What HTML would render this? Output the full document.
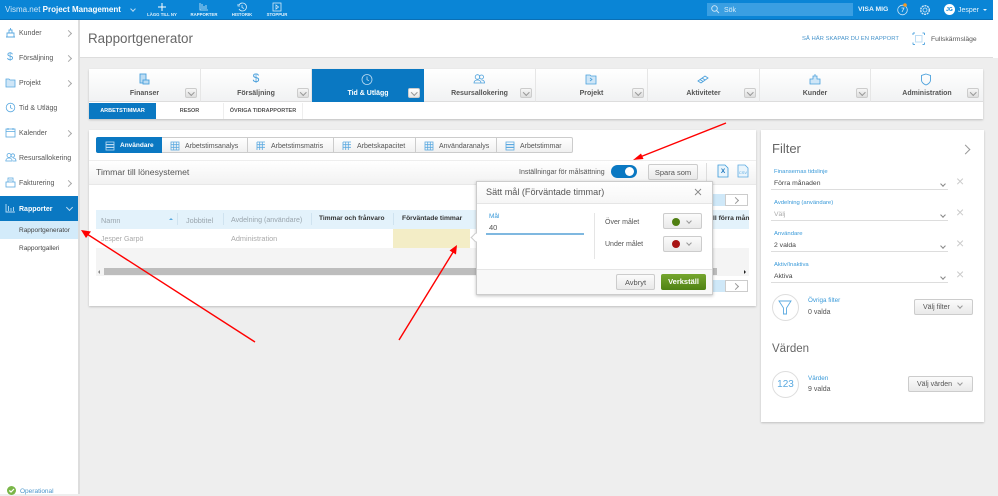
<!DOCTYPE html>
<html lang="sv"><head><meta charset="utf-8"><title>Rapportgenerator</title>
<style>
*{box-sizing:border-box;margin:0;padding:0}
html,body{width:998px;height:494px;overflow:hidden;background:#eee;font-family:"Liberation Sans","DejaVu Sans",sans-serif;color:#555}
.a{position:absolute}
.t{position:absolute;white-space:nowrap;line-height:1}
svg{position:absolute;overflow:visible}
.c{text-align:center}
.tab{position:absolute;top:69px;height:33px;width:112px;background:linear-gradient(#fff,#f1f2f3);border-right:1px solid #e6e6e6;border-bottom:1px solid #ddd}
.tab .l{position:absolute;left:0;right:0;top:21px;text-align:center;font-size:7px;font-weight:bold;color:#555;line-height:1}
.tab .d{position:absolute;left:96px;top:19px;width:12px;height:10px;background:linear-gradient(#f6f6f6,#ddd);border:1px solid #ccc;border-radius:2px}
.tab .d:after{content:"";position:absolute;left:3px;top:1px;width:3.5px;height:3.5px;border-right:1px solid #999;border-bottom:1px solid #999;transform:rotate(45deg)}
.tab svg{left:49px;top:4px}
.s{position:absolute;left:0;width:78px;height:25px}
.s .x{position:absolute;left:19px;top:9px;font-size:7px;color:#555;line-height:1;white-space:nowrap}
.s svg{left:5px;top:6px}
.s i{position:absolute;left:66px;top:10px;width:5px;height:5px;border-right:1px solid #aaa;border-top:1px solid #aaa;transform:rotate(45deg)}
.rt{position:absolute;top:137px;height:16px;background:linear-gradient(#fff,#f0f0f0);border:1px solid #ccc;border-left:none}
.rt span{position:absolute;left:23px;top:5px;font-size:7px;line-height:1;white-space:nowrap;color:#555}
.rt svg{left:8px;top:3px}
.th{position:absolute;top:217px;font-size:7.3px;line-height:1;white-space:nowrap}
.sep{position:absolute;top:213px;width:1px;height:12px;background:#cfe3f0}
.fl{position:absolute;left:774px;font-size:5.9px;color:#3a9ad9;line-height:1;white-space:nowrap}
.fv{position:absolute;left:774px;font-size:6.8px;color:#444;line-height:1;white-space:nowrap}
.fu{position:absolute;left:771px;width:177px;height:1px;background:#ddd}
.fc{position:absolute;left:941px;width:4px;height:4px;border-right:1px solid #888;border-bottom:1px solid #888;transform:rotate(45deg)}
.fx{position:absolute;left:956px;font-size:14px;color:#ccc;line-height:1}
.btn{position:absolute;background:linear-gradient(#fbfbfb,#e9e9e9);border:1px solid #ccc;border-radius:2px;color:#555;font-size:7.5px;line-height:1}
.pg{position:absolute;left:725px;width:23px;height:12px;background:#fff;border:1px solid #ccc}
.pg:after{content:"";position:absolute;left:7px;top:3px;width:4px;height:4px;border-right:1px solid #999;border-top:1px solid #999;transform:rotate(45deg)}
.ci{position:absolute;left:772px;width:27px;height:27px;border-radius:50%;border:1px solid #ddd;background:#fff}
.chev{position:absolute;width:4px;height:4px;border-right:1px solid #999;border-bottom:1px solid #999;transform:rotate(45deg)}
</style></head><body>

<!-- top bar -->
<div class="a" style="left:0;top:0;width:993px;height:20px;background:#0a85d6;border-bottom:1px solid #0a6fb5"></div>
<div class="a" style="left:993px;top:0;width:5px;height:58px;background:#fff"></div>
<div class="t" style="left:5px;top:6px;font-size:8px;color:#cfe6f7">Visma.net <b style="color:#fff">Project Management</b></div>
<div class="chev" style="left:131px;top:7px;border-color:#bcdcf3"></div>
<svg style="left:157px;top:2px" width="10" height="10"><path d="M5 1v8M1 5h8" stroke="#fff" stroke-width="1"/></svg>
<div class="t c" style="left:140px;width:44px;top:12.500px;font-size:4.300px;font-weight:bold;color:#e4f2fb">LÄGG TILL NY</div>
<svg style="left:199px;top:2px" width="10" height="9" fill="none" stroke="#d6ebf9" stroke-width=".8"><path d="M1 1v7h8M3 7V2M5 7V4M7 7V3"/></svg>
<div class="t c" style="left:184px;width:40px;top:12.500px;font-size:4.300px;font-weight:bold;color:#e4f2fb">RAPPORTER</div>
<svg style="left:237px;top:2px" width="10" height="10" fill="none" stroke="#d6ebf9" stroke-width=".8"><path d="M2 3a4 4 0 1 1 0 4M5 3v2.500l2 1M1 2v2h2"/></svg>
<div class="t c" style="left:222px;width:40px;top:12.500px;font-size:4.300px;font-weight:bold;color:#e4f2fb">HISTORIK</div>
<svg style="left:272px;top:2px" width="10" height="10" fill="none" stroke="#d6ebf9" stroke-width=".8"><rect x="1" y="1" width="8" height="8"/><path d="M4 3l2.500 2L4 7z"/></svg>
<div class="t c" style="left:257px;width:40px;top:12.500px;font-size:4.300px;font-weight:bold;color:#e4f2fb">STOPPUR</div>

<div class="a" style="left:707px;top:3px;width:146px;height:13px;background:#3a9fe2"></div>
<svg style="left:711px;top:5px" width="9" height="9" fill="none" stroke="#cfe6f7" stroke-width=".9"><circle cx="3.500" cy="3.500" r="2.800"/><path d="M5.500 5.500L8 8"/></svg>
<div class="t" style="left:724px;top:7px;font-size:7px;color:#d8edfa">Sök</div>
<div class="t" style="left:858px;top:7px;font-size:6.800px;font-weight:bold;color:#eaf5fc">VISA MIG</div>
<svg style="left:896px;top:3px" width="14" height="14" fill="none"><circle cx="6.500" cy="7" r="4.800" stroke="#cfe6f7" stroke-width=".8"/><path d="M5.500 5h2.500L6 9" stroke="#cfe6f7" stroke-width=".8"/><circle cx="9" cy="2" r="1.800" fill="#f59a23"/></svg>
<svg style="left:919px;top:4px" width="12" height="12" fill="none" stroke="#cfe6f7" stroke-width=".8"><circle cx="6" cy="6" r="2"/><circle cx="6" cy="6" r="4.300" stroke-dasharray="2 .8" stroke-width="1.400"/></svg>
<div class="a" style="left:944px;top:4px;width:11px;height:11px;border-radius:50%;background:#fff"></div>
<div class="t c" style="left:944px;width:11px;top:7.500px;font-size:5px;font-weight:bold;color:#0a85d6">JG</div>
<div class="t" style="left:958px;top:7px;font-size:7px;color:#e4f2fb">Jesper</div>
<div class="a" style="left:983px;top:9px;border-left:2px solid transparent;border-right:2px solid transparent;border-top:2px solid #e4f2fb"></div>

<!-- sidebar -->
<div class="a" style="left:0;top:20px;width:78px;height:474px;background:#fff"></div>
<div class="a" style="left:78px;top:20px;width:2px;height:474px;background:#ddd"></div>

<div class="s" style="top:21px"><svg width="11" height="11" fill="none" stroke="#5aa9e0" stroke-width=".9"><path d="M1 10h9M2 10V6h7v4M4 6V3h3v3M5.500 1v2"/></svg><div class="x">Kunder</div><i></i></div>
<div class="s" style="top:46px"><div class="t" style="left:7px;top:6px;font-size:11px;color:#5aa9e0">$</div><div class="x">Försäljning</div><i></i></div>
<div class="s" style="top:71px"><svg width="11" height="11" fill="#cfe6f7" stroke="#5aa9e0" stroke-width=".8"><path d="M1 2h3l1 1h5v7H1z"/></svg><div class="x">Projekt</div><i></i></div>
<div class="s" style="top:96px"><svg width="11" height="11" fill="none" stroke="#5aa9e0" stroke-width=".8"><circle cx="5.500" cy="5.500" r="4.300"/><path d="M5.500 3v2.800l2 1"/></svg><div class="x">Tid &amp; Utlägg</div></div>
<div class="s" style="top:121px"><svg width="11" height="11" fill="none" stroke="#5aa9e0" stroke-width=".8"><rect x="1" y="2" width="9" height="8"/><path d="M1 4.500h9M3 1v2M8 1v2"/></svg><div class="x">Kalender</div><i></i></div>
<div class="s" style="top:146px"><svg width="11" height="11" fill="none" stroke="#5aa9e0" stroke-width=".8"><circle cx="4" cy="3.500" r="2"/><circle cx="7.800" cy="3.500" r="1.700"/><path d="M.8 9c0-4 6.400-4 6.400 0zM8 6c2 0 3 1 3 3H8"/></svg><div class="x">Resursallokering</div></div>
<div class="s" style="top:171px"><svg width="11" height="11" fill="none" stroke="#5aa9e0" stroke-width=".8"><rect x="1" y="5" width="9" height="5"/><path d="M3 5V1h5v4M4 3h3"/></svg><div class="x">Fakturering</div><i></i></div>
<div class="a" style="left:0;top:196px;width:78px;height:25px;background:#0a78c2"></div>
<div class="s" style="top:196px"><svg width="11" height="11" fill="none" stroke="#b9ddf5" stroke-width=".9"><path d="M1 2v8h9M3.500 9V4M6 9V6M8.500 9V5"/></svg><div class="x" style="color:#fff;font-weight:bold;top:10px">Rapporter</div></div>
<div class="chev" style="left:67px;top:205px;width:5px;height:5px;border-color:#bcdcf3"></div>
<div class="a" style="left:0;top:221px;width:78px;height:18px;background:#d3ebfa"></div>
<div class="t" style="left:19px;top:228px;font-size:6.500px;color:#444">Rapportgenerator</div>
<div class="t" style="left:19px;top:246px;font-size:6.500px;color:#444">Rapportgalleri</div>
<div class="a" style="left:7px;top:486px;width:9px;height:9px;border-radius:50%;background:#7ab648"></div>
<svg style="left:7px;top:486px" width="9" height="8" fill="none" stroke="#fff" stroke-width="1.200"><path d="M2.300 4.500l1.700 1.500 3-3"/></svg>
<div class="t" style="left:20px;top:489px;font-size:6.500px;color:#4a96cc">Operational</div>

<!-- title -->
<div class="a" style="left:80px;top:20px;width:913px;height:38px;background:#fff;border-bottom:1px solid #ddd"></div>
<div class="t" style="left:88px;top:32px;font-size:13.400px;color:#666">Rapportgenerator</div>
<div class="t" style="left:802px;top:37px;font-size:5.900px;color:#4a96cc">SÅ HÄR SKAPAR DU EN RAPPORT</div>
<svg style="left:913px;top:33px" width="12" height="12" fill="none" stroke="#5aa9e0" stroke-width="1"><rect x="2.500" y="2.500" width="6.500" height="6.500" stroke="#bcdcf3"/><path d="M0 0h2M9.500 0h2M0 11.500h2M9.500 11.500h2M0 0v2M11.500 0v2M0 9.500v2M11.500 9.500v2"/></svg>
<div class="t" style="left:931px;top:37px;font-size:6.800px;color:#555">Fullskärmsläge</div>

<!-- module tabs -->
<div class="a" style="left:89px;top:69px;width:894px;height:50px;background:#fff;box-shadow:0 1px 2px rgba(0,0,0,.2)"></div>
<div class="tab" style="left:89px"><svg width="12" height="13" fill="#bcdcf3" stroke="#4aa0dc" stroke-width=".9"><rect x="2" y="1" width="6" height="9"/><rect x="5" y="7" width="6" height="4"/></svg><div class="l">Finanser</div><div class="d"></div></div>
<div class="tab" style="left:201px;width:111px"><div class="t c" style="left:49px;top:3px;width:12px;font-size:12px;color:#4aa0dc">$</div><div class="l">Försäljning</div><div class="d"></div></div>
<div class="tab" style="left:312px;background:#0a78c2;border:none;height:33px"><svg width="12" height="13" fill="none" stroke="#bcdcf3" stroke-width=".8"><circle cx="6" cy="6.500" r="5"/><path d="M6 3.500v3.200l2 1"/></svg><div class="l" style="color:#fff">Tid &amp; Utlägg</div><div class="d" style="background:linear-gradient(#fff,#e8e8e8)"></div></div>
<div class="tab" style="left:424px"><svg width="12" height="13" fill="none" stroke="#4aa0dc" stroke-width=".8"><circle cx="4.500" cy="4" r="2.300"/><circle cx="8.500" cy="4" r="2"/><path d="M1 10c0-4 7-4 7 0zM8.500 7c2 0 3 1 3 3H8"/></svg><div class="l">Resursallokering</div><div class="d"></div></div>
<div class="tab" style="left:536px"><svg width="12" height="13" fill="#cfe6f7" stroke="#4aa0dc" stroke-width=".8"><path d="M1 2h4l1 1h5v8H1z"/><path d="M5 5l2 1.500L5 8" fill="none"/></svg><div class="l">Projekt</div><div class="d"></div></div>
<div class="tab" style="left:648px"><svg width="12" height="13" fill="none" stroke="#4aa0dc" stroke-width=".9"><path d="M1 8l7-5 3 2-7 5zM3 6.500l3 2M5 5l3 2"/></svg><div class="l">Aktiviteter</div><div class="d"></div></div>
<div class="tab" style="left:760px;width:111px"><svg width="12" height="13" fill="#cfe6f7" stroke="#4aa0dc" stroke-width=".8"><path d="M1 11V6h3V3h4v3h3v5zM6 1v2"/></svg><div class="l">Kunder</div><div class="d"></div></div>
<div class="tab" style="left:871px;width:112px;border-right:none"><svg width="12" height="13" fill="none" stroke="#4aa0dc" stroke-width=".9"><path d="M6 1l4.500 1.500V7c0 2.500-2 4-4.500 5C3.500 11 1.500 9.500 1.500 7V2.500z"/></svg><div class="l">Administration</div><div class="d"></div></div>

<div class="a" style="left:89px;top:103px;width:67px;height:16px;background:#0a78c2"></div>
<div class="t c" style="left:89px;width:67px;top:109px;font-size:5.500px;font-weight:bold;color:#fff">ARBETSTIMMAR</div>
<div class="t c" style="left:156px;width:67px;top:109px;font-size:5.500px;font-weight:bold;color:#555">RESOR</div>
<div class="t c" style="left:223px;width:80px;top:109px;font-size:5.500px;font-weight:bold;color:#555">ÖVRIGA TIDRAPPORTER</div>
<div class="a" style="left:223px;top:103px;width:1px;height:16px;background:#eee"></div>
<div class="a" style="left:302px;top:103px;width:1px;height:16px;background:#eee"></div>

<!-- main card -->
<div class="a" style="left:89px;top:130px;width:667px;height:176px;background:#fff;box-shadow:0 1px 2px rgba(0,0,0,.2)"></div>
<div class="rt" style="left:96px;width:66px;background:#0a78c2;border:1px solid #0a78c2;border-radius:2px 0 0 2px"><svg width="10" height="10" fill="none" stroke="#bcdcf3" stroke-width=".8"><rect x="1" y="1" width="8" height="2.400"/><rect x="1" y="3.800" width="8" height="2.400"/><rect x="1" y="6.600" width="8" height="2.400"/></svg><span style="color:#fff;font-weight:bold;font-size:6.500px">Användare</span></div>
<div class="rt" style="left:162px;width:86px"><svg width="10" height="10" fill="none" stroke="#5aa9e0" stroke-width=".8"><rect x="1" y="1" width="8" height="8"/><path d="M3.700 1v8M6.300 1v8M1 3.700h8M1 6.300h8"/></svg><span>Arbetstimsanalys</span></div>
<div class="rt" style="left:248px;width:86px"><svg width="10" height="10" fill="none" stroke="#5aa9e0" stroke-width=".8"><path d="M1 1h8M1 3.700h8M1 6.300h8M3.700 1v8M6.300 1v8M1 1v8"/></svg><span>Arbetstimsmatris</span></div>
<div class="rt" style="left:334px;width:82px"><svg width="10" height="10" fill="none" stroke="#5aa9e0" stroke-width=".8"><path d="M1 1h8M1 3.700h8M1 6.300h8M3.700 1v8M6.300 1v8M1 1v8"/></svg><span>Arbetskapacitet</span></div>
<div class="rt" style="left:416px;width:81px"><svg width="10" height="10" fill="none" stroke="#5aa9e0" stroke-width=".8"><rect x="1" y="1" width="8" height="8"/><path d="M3.700 1v8M6.300 1v8M1 3.700h8M1 6.300h8"/></svg><span>Användaranalys</span></div>
<div class="rt" style="left:497px;width:76px;border-radius:0 2px 2px 0"><svg width="10" height="10" fill="none" stroke="#5aa9e0" stroke-width=".8"><rect x="1" y="1" width="8" height="2.400"/><rect x="1" y="3.800" width="8" height="2.400"/><rect x="1" y="6.600" width="8" height="2.400"/></svg><span>Arbetstimmar</span></div>

<div class="a" style="left:89px;top:160px;width:667px;height:25px;background:linear-gradient(#fff,#f2f2f2);border-top:1px solid #eee;border-bottom:1px solid #e8e8e8"></div>
<div class="t" style="left:96px;top:168px;font-size:8.700px;color:#555">Timmar till lönesystemet</div>
<div class="t" style="left:519px;top:169px;font-size:7px;color:#555">Inställningar för målsättning</div>
<div class="a" style="left:611px;top:165px;width:26px;height:13px;border-radius:7px;background:#0a78c2"></div>
<div class="a" style="left:625px;top:167px;width:9px;height:9px;border-radius:50%;background:#fff"></div>
<div class="btn" style="left:648px;top:164px;width:50px;height:16px;text-align:center;padding-top:4px">Spara som</div>
<div class="a" style="left:706px;top:163px;width:1px;height:18px;background:#ddd"></div>
<svg style="left:717px;top:164px" width="13" height="15" fill="#eaf5fc" stroke="#3a9ad9" stroke-width=".8"><path d="M1 1h7l3 3v9H1z"/></svg>
<div class="t c" style="left:717px;width:12px;top:169px;font-size:6.500px;font-weight:bold;color:#1b75bb">X</div>
<svg style="left:737px;top:164px" width="13" height="15" fill="#eaf5fc" stroke="#5aa9e0" stroke-width=".8"><path d="M1 1h7l3 3v9H1z"/></svg>
<div class="t c" style="left:737px;width:12px;top:171px;font-size:4px;color:#5aa9e0">CSV</div>

<!-- pager -->
<div class="a" style="left:700px;top:194px;width:25px;height:12px;background:#cfe8f8"></div><div class="pg" style="top:194px"></div>
<div class="a" style="left:700px;top:280px;width:25px;height:12px;background:#cfe8f8"></div><div class="pg" style="top:280px"></div>

<!-- table -->
<div class="a" style="left:96px;top:210px;width:653px;height:19px;background:#e3f2fb"></div>
<div class="th" style="left:101px;color:#9aa5ad">Namn</div>
<div class="a" style="left:169px;top:218px;border-left:2px solid transparent;border-right:2px solid transparent;border-bottom:2px solid #5aa9e0"></div>
<div class="sep" style="left:177px"></div>
<div class="th" style="left:186px;color:#9aa5ad">Jobbtitel</div>
<div class="sep" style="left:223px"></div>
<div class="th" style="left:231px;color:#9aa5ad;font-size:7.100px">Avdelning (användare)</div>
<div class="sep" style="left:311px"></div>
<div class="th" style="left:319px;top:216px;color:#333;font-weight:bold;font-size:6.600px">Timmar och frånvaro</div>
<div class="sep" style="left:393px"></div>
<div class="th" style="left:402px;top:216px;color:#333;font-weight:bold;font-size:6.700px">Förväntade timmar</div>
<div class="th" style="left:713px;top:216px;color:#333;font-weight:bold;font-size:6.700px">ll förra mån</div>
<div class="t" style="left:101px;top:235.500px;font-size:7px;color:#aaa">Jesper Garpö</div>
<div class="t" style="left:231px;top:235px;font-size:7.300px;color:#aaa">Administration</div>
<div class="a" style="left:393px;top:229px;width:77px;height:19px;background:#f3edc6"></div>
<div class="a" style="left:96px;top:248px;width:653px;height:28px;background:#f4f4f4"></div>
<div class="a" style="left:104px;top:268px;width:613px;height:7px;background:#bdbdbd"></div>
<div class="a" style="left:98px;top:270px;border-top:2px solid transparent;border-bottom:2px solid transparent;border-right:2px solid #888"></div>
<div class="a" style="left:744px;top:270px;border-top:2px solid transparent;border-bottom:2px solid transparent;border-left:2px solid #222"></div>

<!-- dialog -->
<div class="a" style="left:476px;top:181px;width:237px;height:114px;background:#fff;border:1px solid #ccc;box-shadow:0 1px 3px rgba(0,0,0,.25)"></div>
<div class="a" style="left:472px;top:234px;width:7px;height:7px;background:#fff;border-left:1px solid #ccc;border-bottom:1px solid #ccc;transform:rotate(45deg)"></div>
<div class="a" style="left:477px;top:182px;width:235px;height:22px;background:linear-gradient(#fff,#f6f6f6);border-bottom:1px solid #e5e5e5"></div>
<div class="t" style="left:486px;top:188px;font-size:9.100px;color:#555">Sätt mål (Förväntade timmar)</div>
<svg style="left:694px;top:188px" width="8" height="8" stroke="#888" stroke-width=".9"><path d="M1 1l6 6M7 1l-6 6"/></svg>
<div class="t" style="left:489px;top:214px;font-size:6.500px;color:#3a9ad9">Mål</div>
<div class="t" style="left:489px;top:224px;font-size:7.500px;color:#555">40</div>
<div class="a" style="left:486px;top:233px;width:98px;height:1.500px;background:#7fb8e0"></div>
<div class="a" style="left:594px;top:213px;width:1px;height:46px;background:#e5e5e5"></div>
<div class="t" style="left:605px;top:219px;font-size:7px;color:#555">Över målet</div>
<div class="t" style="left:605px;top:241px;font-size:7px;color:#555">Under målet</div>
<div class="btn" style="left:663px;top:213px;width:39px;height:16px"></div>
<div class="a" style="left:672px;top:218px;width:8px;height:8px;border-radius:50%;background:#4f7f12"></div>
<div class="chev" style="left:687px;top:219px"></div>
<div class="btn" style="left:663px;top:236px;width:39px;height:16px"></div>
<div class="a" style="left:672px;top:240px;width:8px;height:8px;border-radius:50%;background:#a81414"></div>
<div class="chev" style="left:687px;top:241px"></div>
<div class="a" style="left:477px;top:269px;width:235px;height:25px;background:#f8f8f8;border-top:1px solid #e5e5e5"></div>
<div class="btn" style="left:616px;top:274px;width:39px;height:16px;text-align:center;padding-top:4px">Avbryt</div>
<div class="a" style="left:661px;top:274px;width:45px;height:16px;background:linear-gradient(#75a62e,#4f8214);border-radius:2px;color:#fff;font-size:7.500px;font-weight:bold;text-align:center;padding-top:4px;line-height:1">Verkställ</div>

<!-- filter -->
<div class="a" style="left:761px;top:130px;width:223px;height:292px;background:#fff;box-shadow:0 1px 2px rgba(0,0,0,.2)"></div>
<div class="t" style="left:772px;top:142px;font-size:13px;color:#666">Filter</div>
<div class="a" style="left:962px;top:146px;width:7px;height:7px;border-right:1px solid #999;border-top:1px solid #999;transform:rotate(45deg)"></div>

<div class="fl" style="top:170px">Finansernas tidslinje</div><div class="fv" style="top:180.500px">Förra månaden</div><div class="fu" style="top:189px"></div><div class="fc" style="top:182px"></div><div class="fx" style="top:174px">×</div>
<div class="fl" style="top:201px">Avdelning (användare)</div><div class="fv" style="top:211.500px;color:#aaa">Välj</div><div class="fu" style="top:220px"></div><div class="fc" style="top:213px"></div><div class="fx" style="top:205px">×</div>
<div class="fl" style="top:232px">Användare</div><div class="fv" style="top:242.500px">2 valda</div><div class="fu" style="top:251px"></div><div class="fc" style="top:244px"></div><div class="fx" style="top:236px">×</div>
<div class="fl" style="top:263px">Aktiv/Inaktiva</div><div class="fv" style="top:273.500px">Aktiva</div><div class="fu" style="top:282px"></div><div class="fc" style="top:275px"></div><div class="fx" style="top:267px">×</div>

<div class="ci" style="top:294px"></div>
<svg style="left:778px;top:300px" width="16" height="16" fill="none" stroke="#5aa9e0" stroke-width=".9"><path d="M1 1h12L8.500 8v6h-3V8z"/></svg>
<div class="fl" style="left:808px;top:298px;font-size:6.300px">Övriga filter</div>
<div class="t" style="left:808px;top:308.500px;font-size:7px;color:#555">0 valda</div>
<div class="btn" style="left:914px;top:299px;width:59px;height:16px;padding:4px 0 0 8px;font-size:7px">Välj filter</div>
<div class="chev" style="left:958px;top:304px"></div>

<div class="t" style="left:772px;top:344px;font-size:11.500px;color:#666">Värden</div>

<div class="ci" style="top:371px"></div>
<div class="t c" style="left:772px;width:27px;top:380px;font-size:10px;color:#5aa9e0">123</div>
<div class="fl" style="left:808px;top:375.500px;font-size:6.300px">Värden</div>
<div class="t" style="left:808px;top:385.500px;font-size:7px;color:#555">9 valda</div>
<div class="btn" style="left:908px;top:376px;width:65px;height:16px;padding:4px 0 0 8px;font-size:7px">Välj värden</div>
<div class="chev" style="left:958px;top:381px"></div>

<!-- annotations -->
<svg style="left:0;top:0" width="998" height="494" fill="none">
<g stroke="#f00" stroke-width="1.400">
<path d="M255 342L87 234"/>
<path d="M399 340L455 249"/>
<path d="M726 123L640 157"/>
</g>
<path d="M81 230l10 1.500-5 6.500z" fill="#f00"/>
<path d="M457 245l-1 9.500-6.500-4z" fill="#f00"/>
<path d="M633 160l8-6.500 2.500 5.500z" fill="#f00"/>
</svg>
</body></html>
